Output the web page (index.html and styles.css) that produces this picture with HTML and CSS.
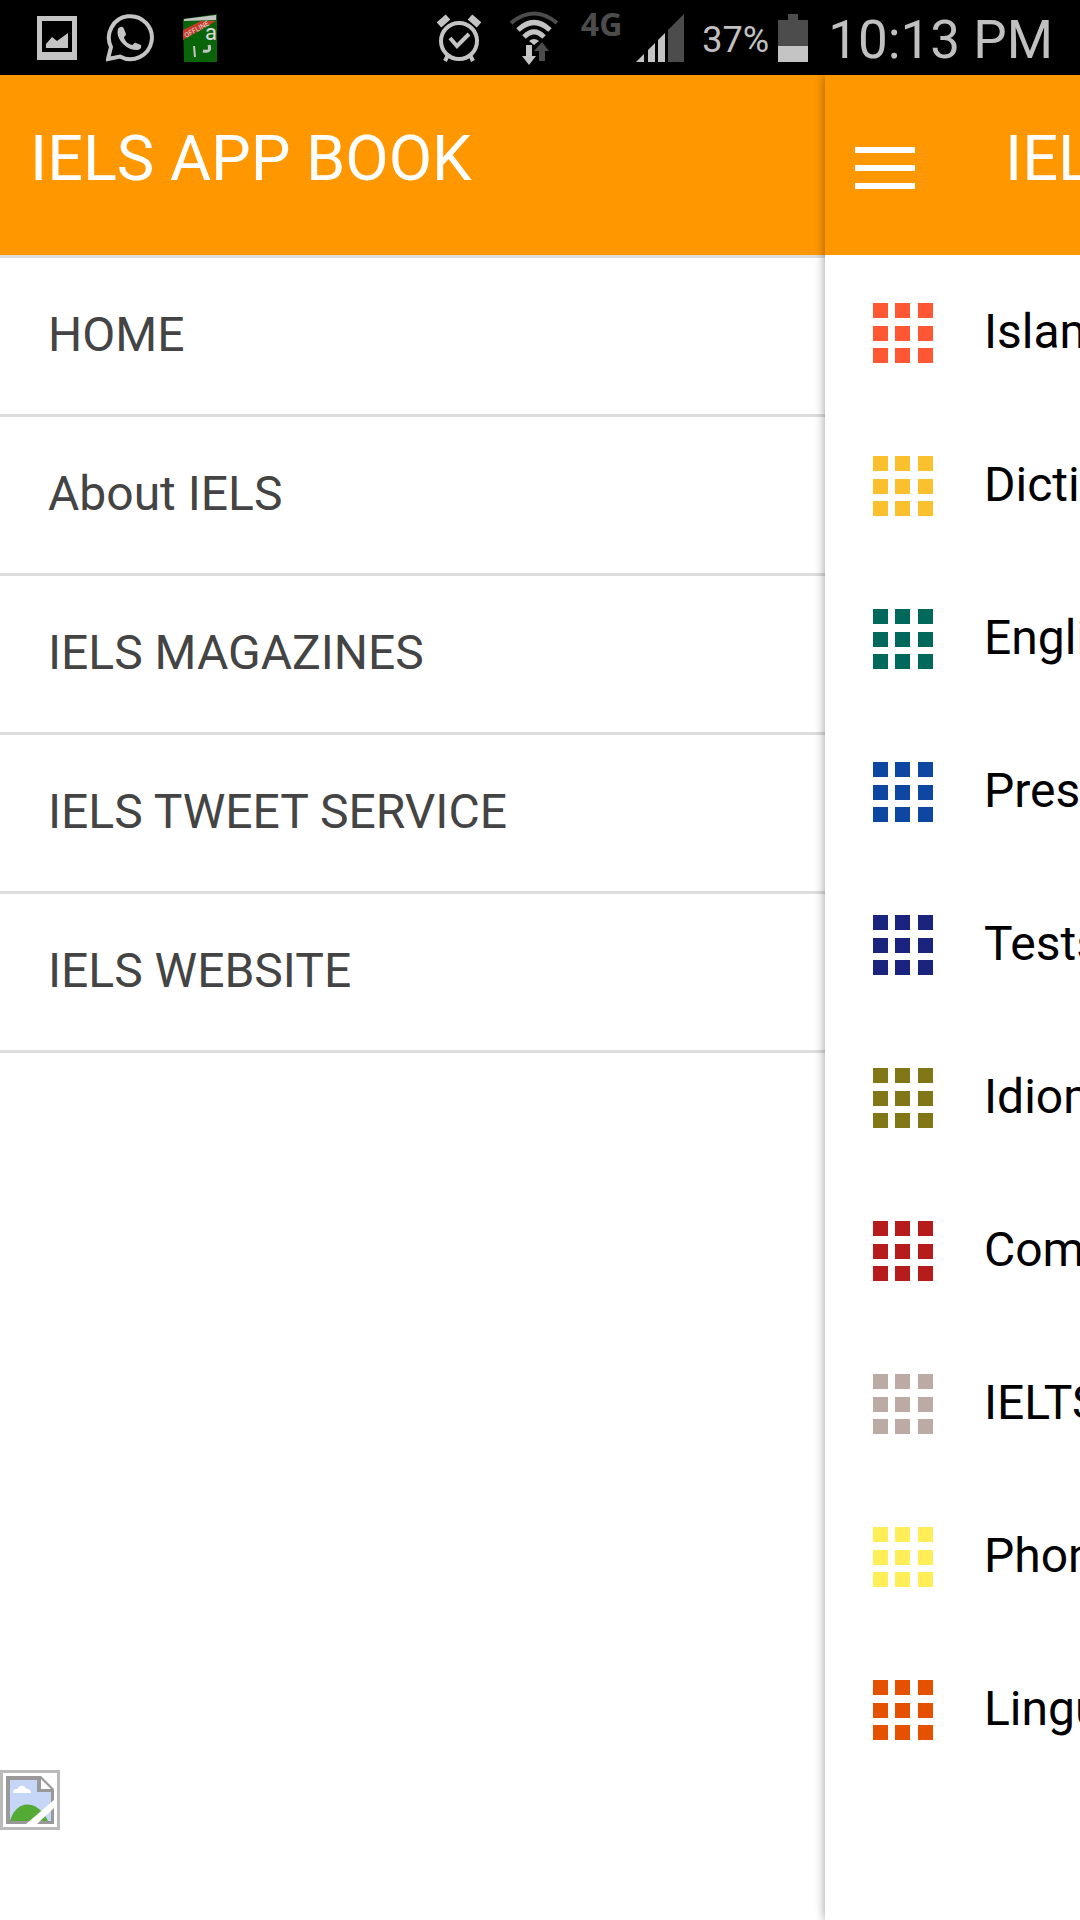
FILE: index.html
```html
<!DOCTYPE html>
<html lang="en">
<head>
    <meta charset="UTF-8">
    <meta name="viewport" content="width=device-width, initial-scale=1.0">
    <title>IELS APP BOOK</title>
    <link rel="stylesheet" href="styles.css">
</head>
<body>
    <!-- grid icon shared by every row of the list -->
    <svg class="sprite" aria-hidden="true">
        <symbol id="grid-icon" viewBox="0 0 60 60">
            <path d="M0 0h15v15H0zM22 0h15v15h-15zM45 0h15v15H45zM0 23h15v15H0zM22 23h15v15h-15zM45 23h15v15H45zM0 45h15v15H0zM22 45h15v15h-15zM45 45h15v15H45z"/>
        </symbol>
    </svg>

    <div class="status-bar">
        <div class="status-left">
            <svg width="40" height="44" viewBox="0 0 40 44">
                <path fill="#c4c4c4" fill-rule="evenodd" d="M0 0h40v44H0zM5 5v31h30V5z"/>
                <path fill="#c4c4c4" d="M9 32v-4l6-7 5 4 11-8v15z"/>
            </svg>
            <svg width="48" height="48" viewBox="1 0 48 48">
                <path fill="none" stroke="#c4c4c4" stroke-width="4" d="M3 45l3-12A21.500 21.500 0 1 1 15 42.500z"/>
                <path fill="#c4c4c4" d="M13 15c2-3 5-3 6 0l2 5c0 2-2 2-2 4 2 4 4 6 8 7 2 0 2-3 4-2l5 2c1 3-1 5-5 5-9 0-21-11-18-21z"/>
            </svg>
            <svg width="36" height="48" viewBox="0 0 36 48">
                <path fill="#0a650a" d="M0 5L34 0v48H1z"/>
                <path fill="#c4c4c4" d="M1 5l32-4v5L1 7z"/>
                <path fill="#c43c28" d="M0 16L18 7h15L0 26z"/>
                <text class="dict-tag" x="3" y="24" transform="rotate(-29 3 24)">OFFLINE</text>
                <text class="dict-letter" x="22" y="26">a</text>
                <path fill="none" stroke="#c4c4c4" stroke-width="2" d="M11 32l1 11"/>
                <path fill="none" stroke="#c4c4c4" stroke-width="3" d="M26 31c2 6-1 7-6 6"/>
            </svg>
        </div>
        <div class="status-right">
            <svg width="44" height="48" viewBox="0 0 44 48">
                <g fill="none" stroke="#c4c4c4">
                    <circle cx="22" cy="27" r="18" stroke-width="4"/>
                    <path stroke-width="4" d="M13 24l7 8 12-12M11 41l-3 6M33 41l3 6"/>
                    <path stroke-width="7" d="M2 11l9-8M42 11l-9-8"/>
                </g>
            </svg>
            <svg class="wifi" width="50" height="54" viewBox="0 0 50 54">
                <g fill="none" stroke-width="4">
                    <path stroke="#4c4c4c" d="M2 12Q25-7 48 12"/>
                    <path stroke="#c4c4c4" stroke-width="5" d="M9 19Q25 4 41 19M15 26Q25 16 35 26"/>
                </g>
                <path fill="#c4c4c4" d="M20 30q5-4 10 0l-5 4zM17 34h6v11h4l-7 9-7-9h4z"/>
                <path fill="#4c4c4c" d="M30 50V40h-5l8-9 7 9h-4v10z"/>
            </svg>
            <span class="network">4G</span>
            <svg width="48" height="48" viewBox="0 0 48 48">
                <path fill="#4c4c4c" d="M32 16L48 0v48H32z"/>
                <path fill="#c4c4c4" d="M0 48l8-8v8zM12 36l7-7v19h-7zM22 26l7-7v29h-7z"/>
            </svg>
            <span class="percent">37%</span>
            <svg width="30" height="48" viewBox="0 0 30 48">
                <path fill="#4c4c4c" d="M10 0h10v6h10v26H0V6h10z"/>
                <path fill="#c4c4c4" d="M0 32h30v16H0z"/>
            </svg>
            <span class="clock">10:13 PM</span>
        </div>
    </div>

    <div class="app">
        <nav class="drawer">
            <h1 class="bar">IELS APP BOOK</h1>
            <ul class="menu">
                <li><a href="#">HOME</a></li>
                <li><a href="#">About IELS</a></li>
                <li><a href="#">IELS MAGAZINES</a></li>
                <li><a href="#">IELS TWEET SERVICE</a></li>
                <li><a href="#">IELS WEBSITE</a></li>
            </ul>
            <svg class="picture" width="60" height="60" viewBox="0 0 60 60">
                <path fill="#bababa" fill-rule="evenodd" d="M0 0h60v60H0zM3 3v54h54V3z"/>
                <path fill="#999" d="M6 6h35l13 13v35H6z"/>
                <path fill="#c5d6f6" d="M10 10h27v12h14v29H10z"/>
                <path fill="#fff" d="M41 9l10 10H41zM13 23q0-4 4-4 5-7 10 0 4 0 4 4z"/>
                <path fill="#54aa34" d="M10 51c6-22 28-22 38 0z"/>
                <path fill="#fff" d="M26 54l28-24v8L37 54z"/>
            </svg>
        </nav>

        <main class="page">
            <header class="bar page-bar">
                <button class="menu-button" type="button" aria-label="Menu">
                    <svg width="60" height="42" viewBox="0 0 60 42">
                        <path fill="#fff" d="M0 0h60v6H0zM0 18h60v6H0zM0 36h60v6H0z"/>
                    </svg>
                </button>
                <span>IELS APP BOOK</span>
            </header>
            <ul class="topics">
                <li><a href="#"><svg class="icon deep-orange"><use href="#grid-icon"/></svg>Islamic</a></li>
                <li><a href="#"><svg class="icon amber"><use href="#grid-icon"/></svg>Dictionary</a></li>
                <li><a href="#"><svg class="icon teal"><use href="#grid-icon"/></svg>English</a></li>
                <li><a href="#"><svg class="icon blue"><use href="#grid-icon"/></svg>Press</a></li>
                <li><a href="#"><svg class="icon indigo"><use href="#grid-icon"/></svg>Tests</a></li>
                <li><a href="#"><svg class="icon olive"><use href="#grid-icon"/></svg>Idioms</a></li>
                <li><a href="#"><svg class="icon red"><use href="#grid-icon"/></svg>Common</a></li>
                <li><a href="#"><svg class="icon brown"><use href="#grid-icon"/></svg>IELTS</a></li>
                <li><a href="#"><svg class="icon yellow"><use href="#grid-icon"/></svg>Phonetics</a></li>
                <li><a href="#"><svg class="icon orange"><use href="#grid-icon"/></svg>Linguistics</a></li>
            </ul>
        </main>
    </div>
</body>
</html>
```

FILE: styles.css
```css
* {
    box-sizing: border-box;
}
body {
    margin: 0;
    min-height: 100vh;
    display: flex;
    flex-direction: column;
    font-family: Roboto, sans-serif;
    font-size: 48px;
    background: #fff;
}
svg {
    display: block;
    flex: none;
}
ul {
    list-style: none;
    margin: 0;
    padding: 0;
}
a {
    text-decoration: none;
    color: inherit;
}
.sprite {
    position: absolute;
    width: 0;
    height: 0;
}

/* status bar */
.status-bar {
    position: relative;
    z-index: 2;
    height: 75px;
    padding: 0 27px 0 37px;
    display: flex;
    align-items: center;
    justify-content: space-between;
    background: #000;
    color: #c0c0c0;
}
.status-left,
.status-right {
    display: flex;
    align-items: center;
}
.status-left {
    gap: 29px;
}
.dict-tag {
    font-size: 7px;
    fill: #ddd;
}
.dict-letter {
    font-size: 22px;
    fill: #ddd;
}
.wifi {
    margin-left: 28px;
}
.network {
    margin: 0 14px 28px 22px;
    font-family: "Open Sans", sans-serif;
    font-size: 32px;
    line-height: 32px;
    font-weight: bold;
    color: #4c4c4c;
}
.percent {
    padding-top: 4px;
    margin: 0 9px 0 18px;
    font-size: 36px;
}
.clock {
    padding-top: 4px;
    margin-left: 20px;
    font-size: 53px;
}

/* drawer + page */
.app {
    flex: 1;
    display: grid;
    grid-template-columns: minmax(0, 1fr) 255px;
}
.bar {
    height: 180px;
    margin: 0;
    padding: 48px 30px;
    background: #ff9800;
    color: #fff;
    font-size: 63px;
    font-weight: 400;
    line-height: 72px;
    white-space: nowrap;
}
.drawer {
    display: flex;
    flex-direction: column;
}
.menu {
    border-top: 3px solid #ddd;
}
.menu li {
    border-bottom: 3px solid #ddd;
}
.menu a {
    display: block;
    padding: 45px 48px 48px;
    line-height: 63px;
    color: #444;
}
.picture {
    margin: auto 0 90px;
}
.page {
    position: relative;
    z-index: 1;
    min-width: 0;
    background: #fff;
    box-shadow: 0 0 10px rgba(0, 0, 0, 0.4);
}
.page-bar {
    display: flex;
    align-items: flex-start;
    gap: 90px;
    overflow: hidden;
}
.menu-button {
    padding: 24px 0 0;
    border: none;
    background: none;
    cursor: pointer;
}
.topics {
    overflow: hidden;
    white-space: nowrap;
}
.topics a {
    display: flex;
    gap: 51px;
    padding: 48px 48px 45px;
    line-height: 57px;
    color: #000;
}
.icon {
    width: 60px;
    height: 60px;
}
.deep-orange { fill: #ff5733; }
.amber { fill: #fbc02d; }
.teal { fill: #00695c; }
.blue { fill: #0d47a1; }
.indigo { fill: #1a237e; }
.olive { fill: #827717; }
.red { fill: #b71c1c; }
.brown { fill: #bcaaa4; }
.yellow { fill: #ffee58; }
.orange { fill: #e65100; }
```
